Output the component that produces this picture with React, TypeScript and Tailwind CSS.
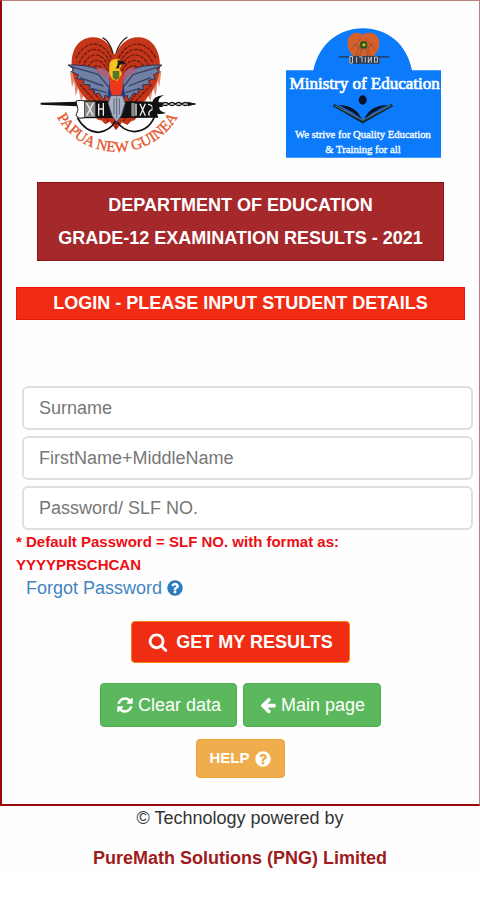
import type { ReactNode } from "react";

const ICONS = {
  search:
    "M1216 832q0-185-131.5-316.5t-316.5-131.5-316.5 131.5-131.5 316.5 131.5 316.5 316.5 131.5 316.5-131.5 131.5-316.5zm512 832q0 52-38 90t-90 38q-54 0-90-38l-343-342q-179 124-399 124-143 0-273.5-55.5t-225-150-150-225-55.5-273.5 55.5-273.5 150-225 225-150 273.5-55.5 273.5 55.5 225 150 150 225 55.5 273.5q0 220-124 399l343 343q37 37 37 90z",
  refresh:
    "M1639 1056q0 5-1 7-64 268-268 434.5t-478 166.5q-146 0-282.5-55t-243.5-157l-129 129q-19 19-45 19t-45-19-19-45v-448q0-26 19-45t45-19h448q26 0 45 19t19 45-19 45l-137 137q71 66 161 102t187 36q134 0 250-65t186-179q11-17 53-117 8-23 30-23h192q13 0 22.5 9.5t9.5 22.5zm25-800v448q0 26-19 45t-45 19h-448q-26 0-45-19t-19-45 19-45l138-138q-148-137-349-137-134 0-250 65t-186 179q-11 17-53 117-8 23-30 23h-199q-13 0-22.5-9.5t-9.5-22.5v-7q65-268 270-434.5t480-166.5q146 0 284 55.5t245 156.5l130-129q19-19 45-19t45 19 19 45z",
  arrowLeft:
    "M1664 896v128q0 53-32.5 90.5t-84.5 37.5h-704l293 294q38 36 38 90t-38 90l-75 76q-37 37-90 37-52 0-91-37l-651-652q-37-37-37-90 0-52 37-91l651-650q38-38 91-38 52 0 90 38l75 74q38 38 38 91t-38 91l-293 293h704q52 0 84.5 37.5t32.5 90.5z",
  question:
    "M1024 1376v-192q0-14-9-23t-23-9h-192q-14 0-23 9t-9 23v192q0 14 9 23t23 9h192q14 0 23-9t9-23zm256-672q0-88-55.5-163t-138.5-116-170-41q-243 0-371 213-15 24 8 42l132 100q7 6 19 6 16 0 25-12 53-68 86-92 34-24 86-24 48 0 85.5 26t37.5 59q0 38-20 61t-68 45q-63 28-115.5 86.5t-52.5 125.5v36q0 14 9 23t23 9h192q14 0 23-9t9-23q0-19 21.5-49.5t54.5-49.5q32-18 49-28.5t46-35 44.5-48 28-60.5 12.5-81zm384 192q0 209-103 385.5t-279.5 279.5-385.5 103-385.5-103-279.5-279.5-103-385.5 103-385.5 279.5-279.5 385.5-103 385.5 103 279.5 279.5 103 385.5z",
};

function Icon({ name, className }: { name: keyof typeof ICONS; className: string }) {
  return (
    <svg viewBox="0 0 1792 1792" fill="currentColor" aria-hidden="true" className={className}>
      <path d={ICONS[name]} />
    </svg>
  );
}

/* Bird of paradise over a kundu drum and spear */
function Bird() {
  const arcs = [0, 1, 2, 3, 4];
  return (
    <g>
      <path d="M120 150l6 50 6-20 5 45 8-25 8 40 10-20 8 30h174l8-30 8 20 8-40 8 25 6-45 5 18 6-48z" fill="#e08a72" />
      <path
        d="M250 98C238 62 212 47 186 49C142 52 120 92 126 142C132 196 160 232 200 262C190 285 200 300 214 298L226 310L240 302L258 328L276 304L292 312L304 300C320 300 326 282 316 262C358 232 386 190 390 140C392 88 366 50 328 49C298 46 268 68 260 98z"
        fill="#c5351a"
      />
      <g fill="none" stroke="#6d1c10" strokeWidth="4" strokeDasharray="12 3">
        {arcs.map((i) => (
          <path key={`l${i}`} d={`M${244 - i * 3} ${112 + i * 13}C${222 - i * 2} ${62 + i * 17} ${170 + i * 5} ${48 + i * 17} ${138 + i * 9} ${112 + i * 15}`} />
        ))}
        {arcs.map((i) => (
          <path key={`r${i}`} d={`M${266 + i * 3} ${112 + i * 13}C${288 + i * 2} ${62 + i * 17} ${344 - i * 5} ${48 + i * 17} ${378 - i * 9} ${112 + i * 15}`} />
        ))}
        <path d="M150 190L205 250M170 185L215 245M365 190L308 250M346 185L298 245" />
        <path d="M214 272L235 300M258 285V322M300 272L280 300" />
      </g>
      <path d="M218 50Q240 62 249 98M292 48Q268 62 258 98" fill="none" stroke="#3a1715" strokeWidth="4" />
      <path
        d="M114 132Q175 130 212 148L242 178L250 236L225 222L222 238L206 216L194 220L192 204L178 206L180 192L160 190L162 178L140 172L146 162L124 152L132 145z"
        fill="#6f7fa6"
        stroke="#2b3152"
        strokeWidth="3"
      />
      <path
        d="M396 132Q335 130 302 148L278 178L268 236L291 222L296 238L311 216L324 220L326 204L340 206L338 192L358 190L356 178L376 172L370 162L388 152L380 145z"
        fill="#6f7fa6"
        stroke="#2b3152"
        strokeWidth="3"
      />
      <path d="M122 137L205 160L238 200M150 170L220 195M184 202L230 215M390 137L310 160L278 200M362 170L296 195M330 202L286 215" fill="none" stroke="#38405f" strokeWidth="4" />
      <path d="M192 146Q220 132 240 158L238 180Q214 160 192 146zM322 146Q300 132 280 158L280 180Q302 160 322 146z" fill="#a7617c" />
      <path d="M240 170L232 230H286L278 170z" fill="#26357e" />
      <path d="M242 150Q234 195 246 224Q258 234 272 224Q284 190 276 150z" fill="#e93a1c" />
      <path d="M238 132Q240 112 262 114Q278 118 278 130L268 144L276 158L262 180L246 174L238 158z" fill="#f4c51d" />
      <path d="M248 150h20v20l-9 8-11-8z" fill="#58752a" />
      <path d="M262 118Q278 118 288 128L268 132Q270 145 258 142Q266 128 262 118z" fill="#171717" />
    </g>
  );
}

function Drum() {
  return (
    <g>
      <path d="M32 245L142 242V256L32 251z" fill="#111" />
      <path d="M142 290Q165 332 205 334Q240 330 258 298Q276 328 312 332Q360 330 376 280" fill="none" stroke="#111" strokeWidth="5" />
      <path d="M145 238L385 242Q376 266 385 290L145 292z" fill="#111" />
      <path d="M138 240Q150 236 164 240V290Q148 296 138 284L144 266z" fill="#fff" stroke="#222" strokeWidth="3" />
      <path d="M164 242h32v46h-32zM304 246h10v40h-10z" fill="#8d8d8d" />
      <path
        d="M170 246L190 284M190 246L170 284M206 248V284M220 246V284M206 264H220M318 248V284M330 248L346 284M346 248L330 284M354 250Q372 252 366 266Q352 272 358 284"
        fill="none"
        stroke="#eee"
        strokeWidth="4"
      />
      <path d="M242 224L234 246L246 284L260 304L274 284L286 246L278 224z" fill="#a9b0c0" stroke="#3e4663" strokeWidth="3" />
      <path d="M252 232V280M260 228V292M268 232V280" stroke="#5a627a" strokeWidth="3" />
      <path d="M366 248Q366 226 402 222Q382 232 386 244H398V258H388Q386 272 408 276Q380 286 368 266z" fill="#111" />
      <path d="M396 249q10 -9 20 0t20 0t20 0t20 0l20 0M396 249q10 9 20 0t20 0t20 0t20 0" fill="none" stroke="#111" strokeWidth="5" />
      <path d="M474 242L498 249L474 256z" fill="#111" />
    </g>
  );
}

function NationalCrest() {
  return (
    <svg viewBox="0 0 540 435" role="img" aria-label="Papua New Guinea" className="h-[145px] w-[180px]">
      <Bird />
      <Drum />
      <path id="crest-arc" d="M75 277A209 209 0 0 0 449 277" fill="none" />
      <text fill="#e4562d" stroke="#e4562d" fontSize="45" textAnchor="middle" className="font-['Liberation_Serif',serif]">
        <textPath href="#crest-arc" startOffset="50%">
          PAPUA NEW GUINEA
        </textPath>
      </text>
    </svg>
  );
}

function MinistryLogo() {
  return (
    <svg viewBox="0 0 540 435" role="img" aria-label="Ministry of Education" className="h-[145px] w-[180px]">
      <path d="M33 148H115C132 70 190 22 264 22S396 70 411 148H498V410H33z" fill="#0c7bfb" />
      <g transform="translate(169 16) scale(.37)">
        <path
          d="M255 70C220 40 145 45 132 120C122 190 170 240 210 258H312C350 240 400 190 388 120C375 45 290 40 255 70z"
          fill="#d4602b"
        />
        <path d="M240 100L150 200M245 120L200 240M275 100L370 200M272 120L320 240" stroke="#b84a26" strokeWidth="8" />
        <path d="M180 140L245 185L230 240M340 140L280 185L295 240" fill="none" stroke="#a8593a" strokeWidth="14" />
        <ellipse cx="262" cy="150" rx="30" ry="32" fill="#24551f" />
        <circle cx="264" cy="150" r="13" fill="#e4b92b" />
        <path d="M60 242H470V252H60z" fill="#27324a" />
        <path d="M145 240H390V304H145z" fill="#333c4c" />
        <path d="M150 244h22v54h-22zM205 248v46M225 248h24v44M275 248v46M300 248v46l24-46v46M350 250h24v40h-24z" fill="none" stroke="#c6ccd4" strokeWidth="8" />
      </g>
      <g fill="#fff" stroke="#fff" textAnchor="middle" className="font-['Liberation_Serif',serif]">
        <text x="269" y="205" fontSize="51" strokeWidth="2">Ministry of Education</text>
        <text x="264" y="350" fontSize="32" strokeWidth="1">We strive for Quality Education</text>
        <text x="264" y="395" fontSize="32" strokeWidth="1">&amp; Training for all</text>
      </g>
      <ellipse cx="263" cy="237" rx="12" ry="14" fill="#071326" />
      <path d="M190 252Q244 253 261 296Q240 276 190 252zM338 252Q284 253 267 296Q288 276 338 252z" fill="#071326" />
      <path d="M176 252L263 302L352 252" fill="none" stroke="#10283b" strokeWidth="9" />
      <path d="M180 253L263 298L348 253" fill="none" stroke="#8ba7b0" strokeWidth="2" />
    </svg>
  );
}

function Field({ label, type = "text" }: { label: string; type?: string }) {
  return (
    <input
      type={type}
      aria-label={label}
      placeholder={label}
      className="block h-11 w-full rounded-md border-2 border-[#dfdfdf] bg-white px-[15px] text-lg text-[#555] placeholder:text-[#777] placeholder:opacity-100"
    />
  );
}

function GreenButton({ type, children }: { type: "button" | "reset"; children: ReactNode }) {
  return (
    <button
      type={type}
      className="flex h-11 items-center gap-1 rounded border border-[#4cae4c] bg-[#5cb85c] px-[15px] text-lg text-white"
    >
      {children}
    </button>
  );
}

export default function App() {
  return (
    <div className="bg-[#fefefe] font-['Liberation_Sans',Arial,sans-serif] text-[#333]">
      <main className="border-t border-r border-b-2 border-l-2 border-t-[#b98080] border-r-[#b98080] border-b-[#98090d] border-l-[#98090d] pt-5 pb-[26px]">
        <header>
          <div className="flex justify-between pr-6 pl-7">
            <NationalCrest />
            <MinistryLogo />
          </div>
          <h1 className="mx-[35px] mt-4 border border-[#8b1218] bg-[#a5282b] pt-1.5 pb-[5px] text-center text-lg leading-[33px] font-bold text-white">
            DEPARTMENT OF EDUCATION
            <br />
            GRADE-12 EXAMINATION RESULTS - 2021
          </h1>
        </header>

        <h2 className="mx-3.5 mt-[26px] border border-[#e8160c] bg-[#f02c12] text-center text-lg leading-[31px] font-bold text-white">
          LOGIN - PLEASE INPUT STUDENT DETAILS
        </h2>

        <form className="mt-[66px]">
          <div className="flex flex-col gap-1.5 pr-1.5 pl-5">
            <Field label="Surname" />
            <Field label="FirstName+MiddleName" />
            <Field label="Password/ SLF NO." type="password" />
          </div>
          <p className="max-w-[380px] pl-3.5 text-[15px] leading-[23px] font-bold text-[#ee0d12]">
            * Default Password = SLF NO. with format as: YYYYPRSCHCAN
          </p>
          <a href="#forgot" className="ml-6 inline-flex items-center gap-1 text-lg leading-6 text-[#4284c2]">
            Forgot Password
            <Icon name="question" className="size-[18px] text-[#2c7abf]" />
          </a>

          <div className="mt-5 flex flex-col items-center">
            <button
              type="submit"
              className="flex h-[42px] items-center gap-2 rounded border border-[#f5820e] bg-[#f02c12] px-4 text-lg font-bold text-white"
            >
              <Icon name="search" className="size-5" />
              GET MY RESULTS
            </button>
            <div className="mt-5 flex gap-1.5">
              <GreenButton type="reset">
                <Icon name="refresh" className="size-[18px]" />
                Clear data
              </GreenButton>
              <GreenButton type="button">
                <Icon name="arrowLeft" className="size-[18px]" />
                Main page
              </GreenButton>
            </div>
            <button
              type="button"
              className="mt-3 flex h-[39px] items-center gap-1 rounded-sm border border-[#eea236] bg-[#f0ad4e] px-3 text-[15px] font-bold text-white"
            >
              HELP
              <Icon name="question" className="size-[18px]" />
            </button>
          </div>
        </form>
      </main>

      <footer className="text-center text-lg leading-6">
        <p>© Technology powered by</p>
        <p className="mt-4 font-bold text-[#9e1b20]">PureMath Solutions (PNG) Limited</p>
      </footer>
    </div>
  );
}
